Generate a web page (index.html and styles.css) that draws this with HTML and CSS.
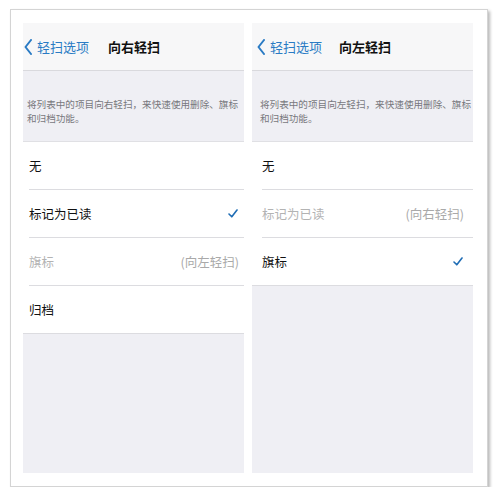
FILE: index.html
```html
<!DOCTYPE html>
<html lang="zh-CN">
<head>
    <meta charset="UTF-8">
    <meta name="viewport" content="width=device-width, initial-scale=1.0">
    <title>轻扫选项</title>
    <link rel="stylesheet" href="styles.css">
</head>
<body>

    <!-- Photo frame with two screenshots -->
    <div class="frame">

        <!-- Swipe right -->
        <div class="screen screen-left">
            <div class="nav">
                <a class="back" href="#">
                    <svg width="8" height="16" viewBox="0 0 8 16"><path d="M7 1 L1.5 8 L7 15" fill="none" stroke="#2a7bc4" stroke-width="2" stroke-linecap="round" stroke-linejoin="round"/></svg>
                    <span>轻扫选项</span>
                </a>
                <p class="title">向右轻扫</p>
            </div>
            <p class="note">将列表中的项目向右轻扫，来快速使用删除、旗标和归档功能。</p>
            <ul class="list">
                <li class="row"><span>无</span></li>
                <li class="row"><span>标记为已读</span><span class="check">
                    <svg width="10" height="9" viewBox="0 0 10 9"><path d="M1 5 L3.8 7.8 L9 1" fill="none" stroke="#1f6db5" stroke-width="1.6" stroke-linecap="round" stroke-linejoin="round"/></svg>
                </span></li>
                <li class="row disabled"><span>旗标</span><span class="hint">(向左轻扫)</span></li>
                <li class="row"><span>归档</span></li>
            </ul>
        </div>

        <!-- Swipe left -->
        <div class="screen screen-right">
            <div class="nav">
                <a class="back" href="#">
                    <svg width="8" height="16" viewBox="0 0 8 16"><path d="M7 1 L1.5 8 L7 15" fill="none" stroke="#2a7bc4" stroke-width="2" stroke-linecap="round" stroke-linejoin="round"/></svg>
                    <span>轻扫选项</span>
                </a>
                <p class="title">向左轻扫</p>
            </div>
            <p class="note">将列表中的项目向左轻扫，来快速使用删除、旗标和归档功能。</p>
            <ul class="list">
                <li class="row"><span>无</span></li>
                <li class="row disabled"><span>标记为已读</span><span class="hint">(向右轻扫)</span></li>
                <li class="row"><span>旗标</span><span class="check">
                    <svg width="10" height="9" viewBox="0 0 10 9"><path d="M1 5 L3.8 7.8 L9 1" fill="none" stroke="#1f6db5" stroke-width="1.6" stroke-linecap="round" stroke-linejoin="round"/></svg>
                </span></li>
            </ul>
        </div>

    </div>

</body>
</html>
```

FILE: styles.css
```css
/* Page */
body {
    margin: 0;
    background: #fff;
    font-family: "Noto Sans CJK SC", "Noto Sans", sans-serif;
}

/* White photo frame */
.frame {
    box-sizing: border-box;
    width: 478px;
    height: 478px;
    margin: 9px 0 0 10px;
    padding: 13px 13px 13px 12px;
    border: 1px solid #d4d4d4;
    box-shadow: 2px 2px 3px rgba(0, 0, 0, 0.28);
    background: #fff;
    display: flex;
    gap: 8px;
}

/* One phone screenshot */
.screen {
    width: 221px;
    display: flex;
    flex-direction: column;
    background: #efeff4;
    --inset: 5px;
}

.screen-right {
    --inset: 9px;
}

/* Navigation bar */
.nav {
    height: 47px;
    display: grid;
    grid-template-columns: 1fr auto 1fr;
    align-items: center;
    background: #f7f7f8;
    border-bottom: 1px solid #d9d9dd;
    padding-left: calc(var(--inset) - 4px);
}

.back {
    display: flex;
    align-items: center;
    gap: 5px;
    color: #2a7bc4;
    text-decoration: none;
    font-size: 13px;
}

.back svg {
    display: block;
}

.title {
    margin: 0;
    font-size: 13px;
    font-weight: bold;
    color: #111;
}

/* Footer text under the bar */
.note {
    margin: 0;
    height: 71px;
    box-sizing: border-box;
    padding: 26px 0 0 calc(var(--inset) - 1px);
    font-size: 9.6px;
    line-height: 14px;
    color: #78787d;
    border-bottom: 1px solid #e0e0e4;
}

/* Option list */
.list {
    list-style: none;
    margin: 0;
    padding: 0 0 0 calc(var(--inset) + 1px);
    background: #fff;
    border-bottom: 1px solid #dcdce0;
}

.row {
    height: 47px;
    display: flex;
    align-items: center;
    justify-content: space-between;
    padding-right: var(--inset);
    font-size: 12.5px;
    color: #111;
    border-bottom: 1px solid #dcdce0;
}

.row:last-child {
    border-bottom: none;
    height: 47px;
}

.disabled {
    color: #b3b3b3;
}

.hint {
    color: #a9a9a9;
}

.check svg {
    display: block;
    margin-right: 1px;
}
```
